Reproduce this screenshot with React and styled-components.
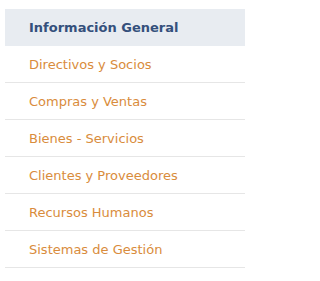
import React from 'react';
import styled, { createGlobalStyle } from 'styled-components';

const GlobalStyle = createGlobalStyle`
  body { margin: 0; background: #fff; font-family: "DejaVu Sans", Verdana, sans-serif; }
`;

const Menu = styled.ul`
  list-style: none;
  margin: 0;
  padding: 9px 6px 0 5px;
  width: 240px;
`;

const Item = styled.li`
  height: 37px;
  box-sizing: border-box;
  display: flex;
  align-items: center;
  padding-left: 24px;
  border-bottom: 1px solid ${p => (p.active ? '#e8ecf1' : '#e6e6e6')};
  background: ${p => (p.active ? '#e8ecf1' : 'transparent')};
  color: ${p => (p.active ? '#34507c' : '#d98c3c')};
  font-size: 13px;
  font-weight: ${p => (p.active ? 'bold' : 'normal')};
  cursor: pointer;
`;

const items = [
  'Información General',
  'Directivos y Socios',
  'Compras y Ventas',
  'Bienes - Servicios',
  'Clientes y Proveedores',
  'Recursos Humanos',
  'Sistemas de Gestión',
];

const App = () => (
  <>
    <GlobalStyle />
    <Menu>
      {items.map((label, i) => (
        <Item key={label} active={i === 0}>{label}</Item>
      ))}
    </Menu>
  </>
);

export default App;
